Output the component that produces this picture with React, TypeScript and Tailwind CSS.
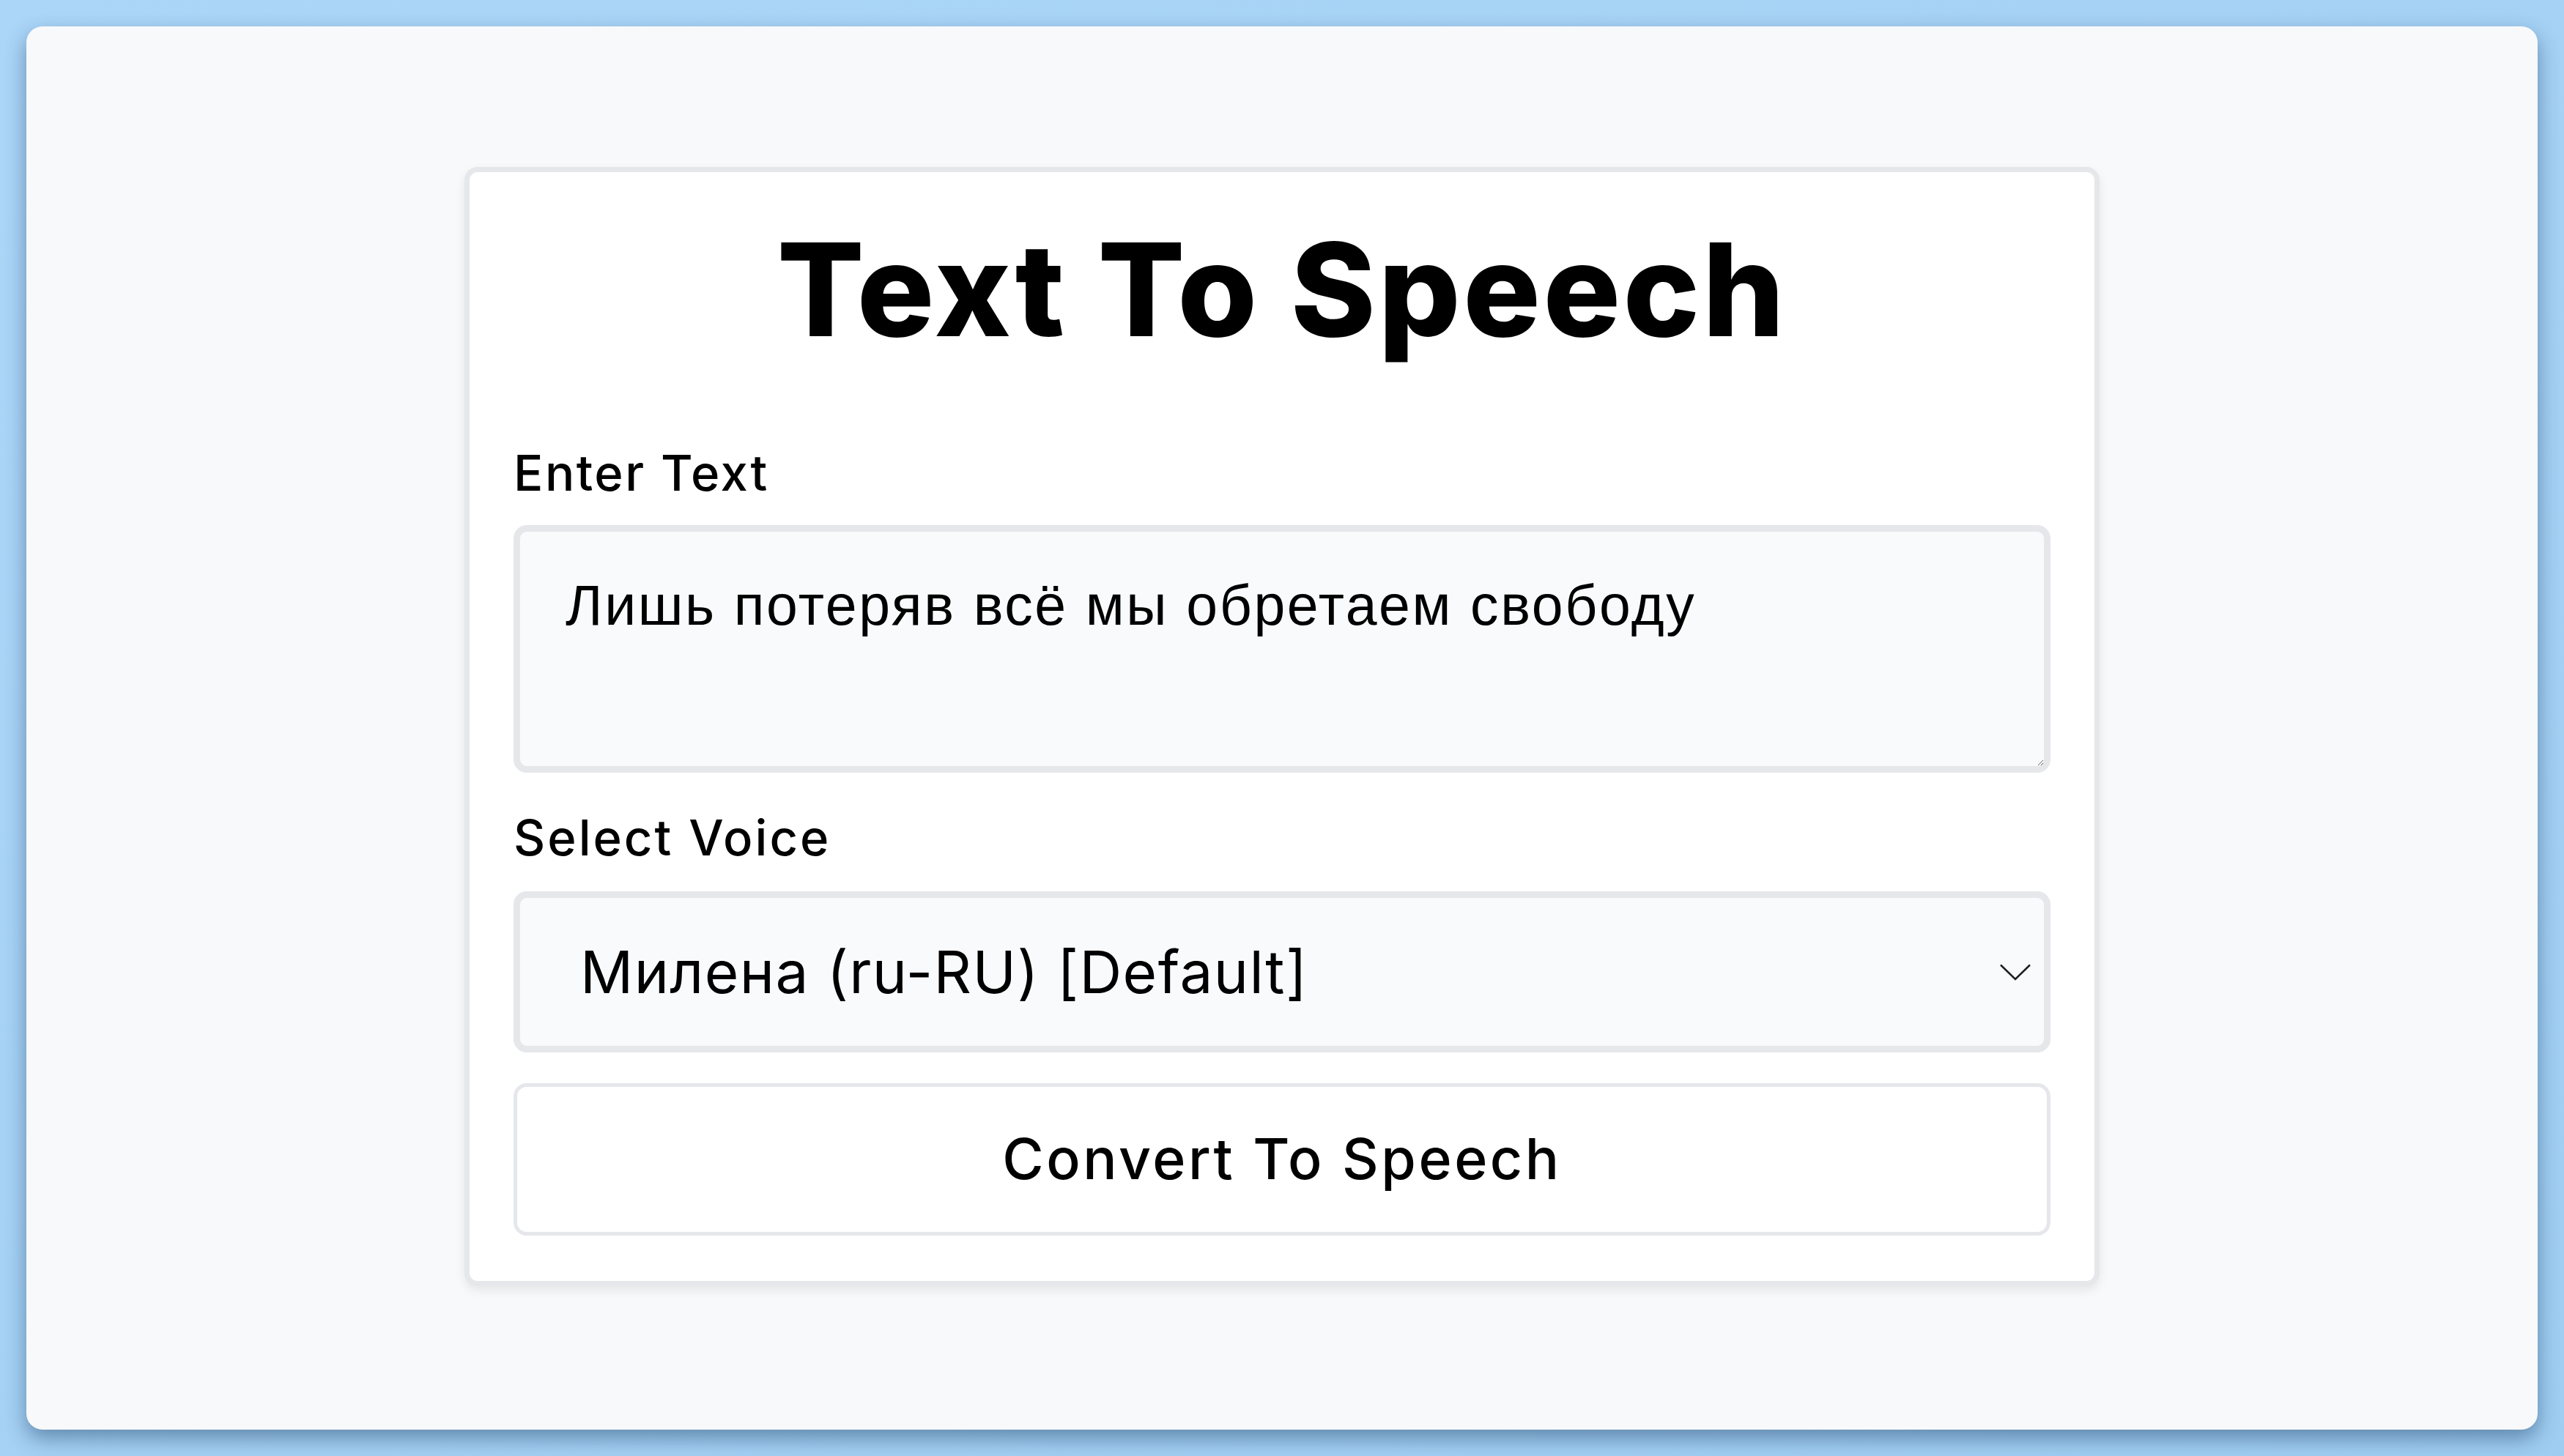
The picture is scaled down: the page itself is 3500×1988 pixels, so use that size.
import { useState } from "react";

const VOICES = ["Милена (ru-RU) [Default]", "Юрий (ru-RU)", "Samantha (en-US)"];

export default function App() {
  const [text, setText] = useState("Лишь потеряв всё мы обретаем свободу");
  const [voice, setVoice] = useState(VOICES[0]);

  return (
    <div className="min-h-[1988px] w-full bg-gradient-to-br from-[#abd6f8] to-[#9fcdf1] p-[36px]">
      <div className="flex h-[1916px] flex-col items-center rounded-[22px] bg-[#f8f9fb] pt-[192px] shadow-[0_12px_28px_rgba(20,50,90,0.45)]">
        {/* карточка */}
        <div className="w-[2232px] rounded-[18px] border-[7px] border-[#e6e7ea] bg-white px-[60px] pb-[62px] pt-[54px] font-[Inter,sans-serif] text-black shadow-[0_6px_14px_rgba(0,0,0,0.08)]">
          <h1 className="text-center text-[176px] font-extrabold leading-[211px] tracking-[3.5px]">
            Text To Speech
          </h1>

          <label className="mt-[106px] block text-[67px] font-medium leading-[80px] tracking-[2.5px]">Enter Text</label>
          <textarea
            value={text}
            onChange={(e) => setText(e.target.value)}
            className="mt-[31px] block h-[338px] w-full rounded-[18px] border-[9px] border-[#e5e7eb] bg-[#f9fafb] px-[62px] pt-[54px] font-['Liberation_Sans',Arial,sans-serif] text-[77px] leading-[92px] tracking-[2.6px] text-black outline-none"
          />

          <label className="mt-[49px] block text-[67px] font-medium leading-[80px] tracking-[3px]">Select Voice</label>
          <div className="relative mt-[33px]">
            <select
              value={voice}
              onChange={(e) => setVoice(e.target.value)}
              className="block h-[220px] w-full appearance-none rounded-[18px] border-[9px] border-[#e5e7eb] bg-[#f9fafb] pl-[82px] text-[80px] leading-[96px] tracking-[1.4px] text-black outline-none"
            >
              {VOICES.map((v) => (
                <option key={v} value={v}>
                  {v}
                </option>
              ))}
            </select>
            <svg
              className="pointer-events-none absolute right-[27px] top-[99px]"
              width="42"
              height="23"
              viewBox="0 0 42 23"
              fill="none"
              stroke="#1f1f1f"
              strokeWidth="2.5"
            >
              <path d="M1 1.5L21 21L41 1.5" />
            </svg>
          </div>

          <button className="mt-[42px] block h-[208px] w-full rounded-[18px] border-[5px] border-[#e5e7eb] bg-white text-[77px] font-medium tracking-[3.5px] text-black">
            Convert To Speech
          </button>
        </div>
      </div>
    </div>
  );
}
